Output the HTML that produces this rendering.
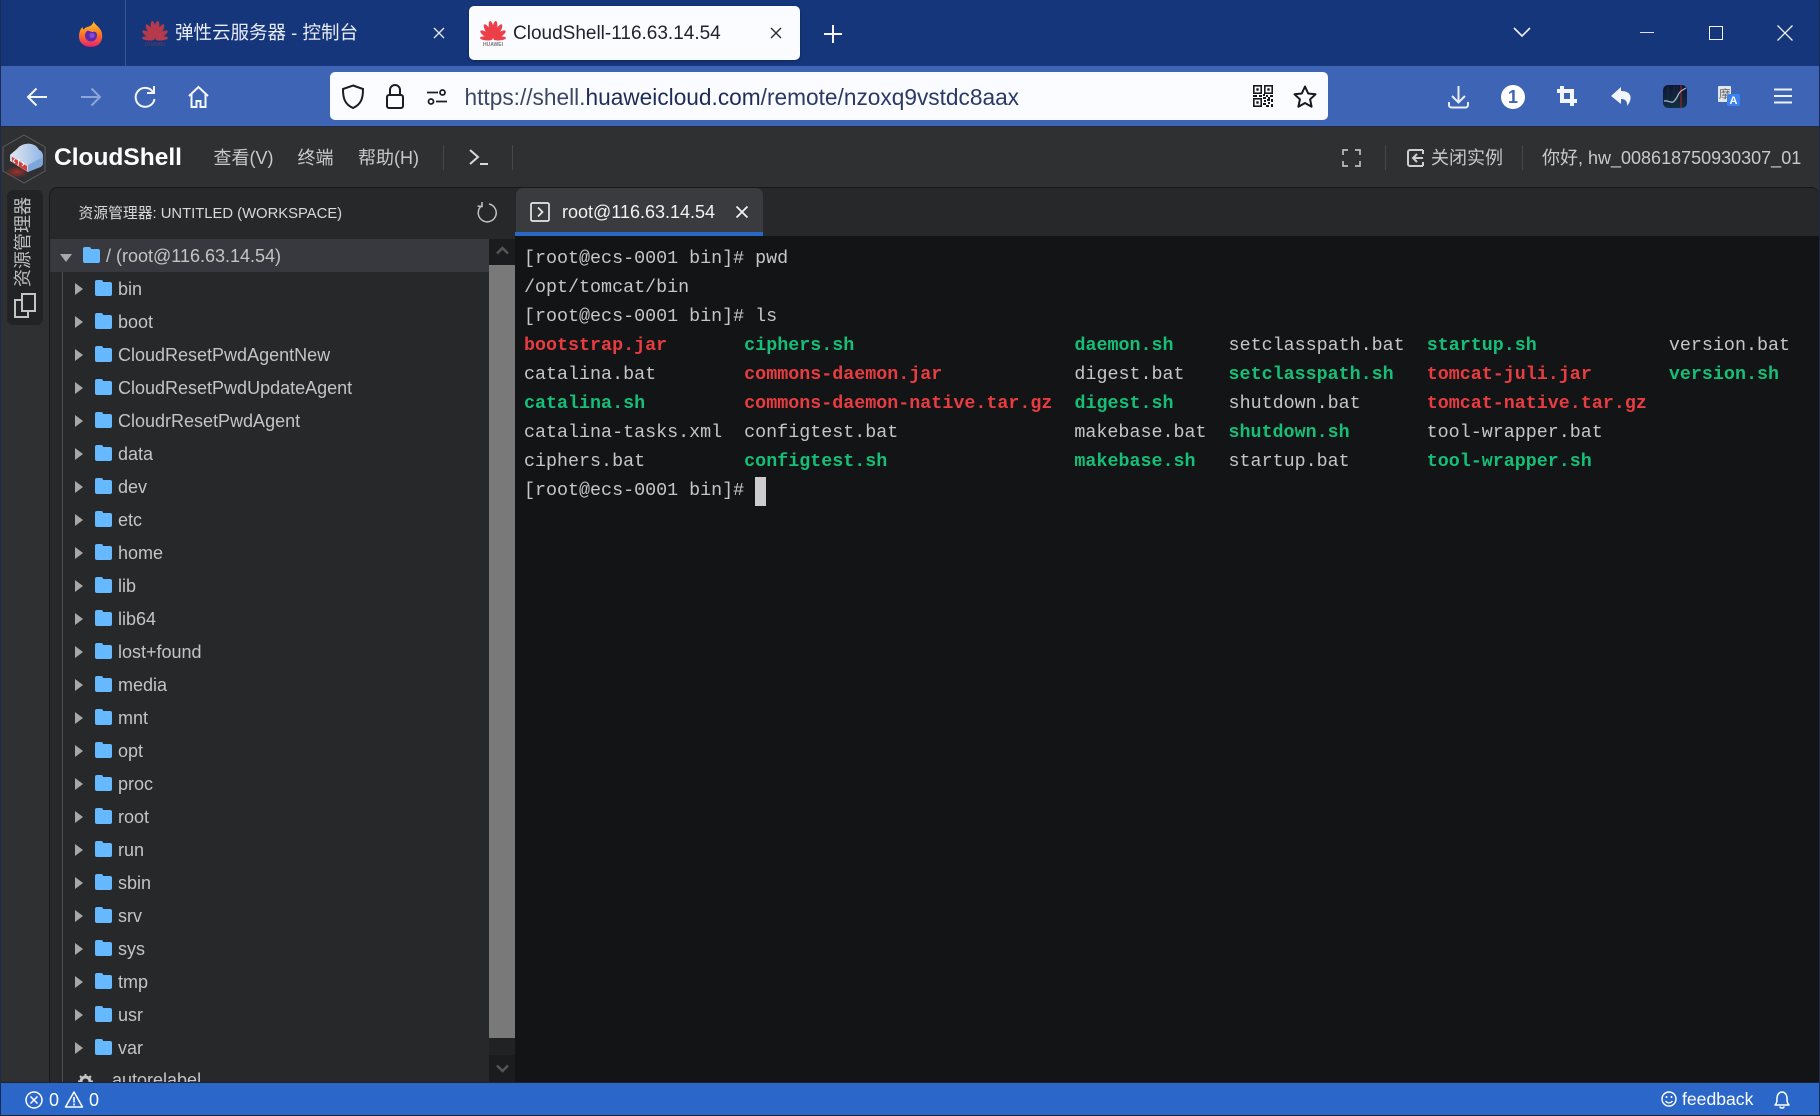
<!DOCTYPE html>
<html lang="zh"><head><meta charset="utf-8"><title>CloudShell-116.63.14.54</title>
<style>
*{box-sizing:border-box;margin:0;padding:0}
html,body{width:1820px;height:1116px;overflow:hidden;background:#2f3032}
body{position:relative;font-family:"Liberation Sans","Noto Sans CJK SC",sans-serif;font-size:18px}
.a{position:absolute;white-space:nowrap}
svg{position:absolute;overflow:visible}
.t{position:absolute;left:0;width:489px;height:33px;line-height:33px;color:#c4c4c4;white-space:nowrap}
.t i{position:absolute;left:75px;top:11px;width:0;height:0;border-left:8px solid #a8a8a8;border-top:6px solid transparent;border-bottom:6px solid transparent}
.t b{position:absolute;left:95px;top:10px;width:17px;height:14px;background:#66b9ff;border-radius:2px}
.t b:before{content:"";position:absolute;left:0;top:-2px;width:8px;height:4px;background:#66b9ff;border-radius:2px 2px 0 0}
.t span{position:absolute;left:118px;top:1px}
#term{position:absolute;left:524px;top:243.5px;font:18.35px/29px "Liberation Mono",monospace;color:#c6c6c6;white-space:pre}
#term .r{color:#e93c41;font-weight:700}
#term .g{color:#15bf77;font-weight:700}
.menu{color:#c9c9c9;top:147px;line-height:22px}
.sep{position:absolute;width:1px;background:#46474a}
</style></head><body>

<!-- browser tab bar -->
<div class="a" style="left:0;top:0;width:1820px;height:66px;background:#16367c"></div>
<div class="a" style="left:125px;top:0;width:1px;height:66px;background:#3b568f"></div>
<svg style="left:79px;top:21px" width="24" height="26" viewBox="0 0 24 26">
<defs><linearGradient id="ff" x1="0" y1="0" x2="0" y2="1"><stop offset="0" stop-color="#ffc52e"/><stop offset=".5" stop-color="#ff7a1f"/><stop offset="1" stop-color="#e8206f"/></linearGradient></defs>
<path d="M14.500 0c.5 3 5 5 7.500 9.500 3 7 0 13-4 15-4 2-10 2-14-1C0 21-1 15 1 10c.5-2 1.500-3 2.500-4 0 1 .5 2 1.500 2.500C6 6 9 6 11 5c2-1 3.500-3 3.500-5z" fill="url(#ff)"/>
<circle cx="12" cy="14.500" r="6" fill="#5a2bb0"/><path d="M8.500 9.500c3-2 7-1 9 2-2-1-3-1-4-.5z" fill="#ff9a2a"/><circle cx="13" cy="14.500" r="2.600" fill="#8a4ad0"/></svg>

<svg style="left:142px;top:20px" width="26" height="26" viewBox="0 0 26 26">
<g fill="#b53a4c" transform="translate(13 19) scale(.84 1) translate(-13 -19)"><ellipse cx="13" cy="9.500" rx="3" ry="8.800" transform="rotate(-11 13 19)"/><ellipse cx="13" cy="9.500" rx="3" ry="8.800" transform="rotate(11 13 19)"/><ellipse cx="13" cy="9.500" rx="2.800" ry="8.500" transform="rotate(-36 13 19)"/><ellipse cx="13" cy="9.500" rx="2.800" ry="8.500" transform="rotate(36 13 19)"/><ellipse cx="13" cy="10" rx="2.500" ry="8" transform="rotate(-62 13 19)"/><ellipse cx="13" cy="10" rx="2.500" ry="8" transform="rotate(62 13 19)"/><ellipse cx="13" cy="11" rx="2" ry="7.500" transform="rotate(-86 13 19)"/><ellipse cx="13" cy="11" rx="2" ry="7.500" transform="rotate(86 13 19)"/></g>
<text x="13" y="26" font-size="5" fill="#4a3a60" text-anchor="middle" font-family="Liberation Sans" font-weight="700">HUAWEI</text></svg>
<div class="a" style="left:175px;top:21px;color:#e8ecf5;font-size:18.500px;line-height:24px">弹性云服务器 - 控制台</div>
<svg style="left:433px;top:27px" width="12" height="12"><path d="M1 1l10 10M11 1L1 11" stroke="#e2e6f0" stroke-width="1.400"/></svg>
<div class="a" style="left:469px;top:6px;width:331px;height:54px;background:#fbfcff;border-radius:5px;box-shadow:0 1px 3px rgba(0,0,0,.3)"></div>
<svg style="left:480px;top:20px" width="26" height="26" viewBox="0 0 26 26">
<g fill="#ec3f49" transform="translate(13 19) scale(.84 1) translate(-13 -19)"><ellipse cx="13" cy="9.500" rx="3" ry="8.800" transform="rotate(-11 13 19)"/><ellipse cx="13" cy="9.500" rx="3" ry="8.800" transform="rotate(11 13 19)"/><ellipse cx="13" cy="9.500" rx="2.800" ry="8.500" transform="rotate(-36 13 19)"/><ellipse cx="13" cy="9.500" rx="2.800" ry="8.500" transform="rotate(36 13 19)"/><ellipse cx="13" cy="10" rx="2.500" ry="8" transform="rotate(-62 13 19)"/><ellipse cx="13" cy="10" rx="2.500" ry="8" transform="rotate(62 13 19)"/><ellipse cx="13" cy="11" rx="2" ry="7.500" transform="rotate(-86 13 19)"/><ellipse cx="13" cy="11" rx="2" ry="7.500" transform="rotate(86 13 19)"/></g>
<text x="13" y="26" font-size="5" fill="#777" text-anchor="middle" font-family="Liberation Sans" font-weight="700">HUAWEI</text></svg>
<div class="a" style="left:513px;top:22px;color:#20242e;font-size:19px;line-height:24px">CloudShell-116.63.14.54</div>
<svg style="left:770px;top:27px" width="12" height="12"><path d="M1 1l10 10M11 1L1 11" stroke="#2a2d36" stroke-width="1.400"/></svg>
<svg style="left:824px;top:25px" width="18" height="18"><path d="M9 0v18M0 9h18" stroke="#f2f4fa" stroke-width="2"/></svg>
<svg style="left:1513px;top:27px" width="18" height="11"><path d="M1 1l8 8 8-8" fill="none" stroke="#f2f4fa" stroke-width="1.600"/></svg>
<div class="a" style="left:1640px;top:32px;width:14px;height:1px;background:#dde3f0"></div>
<div class="a" style="left:1709px;top:26px;width:14px;height:14px;border:1.500px solid #f0f3fa"></div>
<svg style="left:1777px;top:25px" width="16" height="16"><path d="M.5.500l15 15M15.500.500l-15 15" stroke="#f0f3fa" stroke-width="1.300"/></svg>

<!-- nav bar -->
<div class="a" style="left:0;top:66px;width:1820px;height:60px;background:#3e65b5"></div>
<svg style="left:26px;top:86px" width="22" height="22"><path d="M21 11H2M10.500 2.500 2 11l8.500 8.500" fill="none" stroke="#f4f6fb" stroke-width="2"/></svg>
<svg style="left:80px;top:86px" width="22" height="22"><path d="M1 11h19M11.500 2.500 20 11l-8.500 8.500" fill="none" stroke="#8ea6d6" stroke-width="2"/></svg>
<svg style="left:134px;top:85px" width="22" height="24"><path d="M19 7A9.500 9.500 0 1 0 20.500 14M20 1v7h-7" fill="none" stroke="#f4f6fb" stroke-width="2"/></svg>
<svg style="left:187px;top:85px" width="23" height="24"><path d="M2 11 11.500 2 21 11M4.500 9v13h5v-6h4v6h5V9" fill="none" stroke="#f4f6fb" stroke-width="2"/></svg>
<div class="a" style="left:330px;top:72px;width:998px;height:48px;background:#fbfcff;border-radius:5px"></div>
<svg style="left:342px;top:84px" width="22" height="25"><path d="M11 1.500 21 5c0 8-1 15-10 19C2 20 1 13 1 5z" fill="none" stroke="#1c1c22" stroke-width="2"/></svg>
<svg style="left:385px;top:84px" width="20" height="25"><path d="M5 11V6a5 5 0 0 1 10 0v5" fill="none" stroke="#1c1c22" stroke-width="2"/><rect x="2" y="11" width="16" height="13" rx="2" fill="none" stroke="#1c1c22" stroke-width="2"/></svg>
<svg style="left:426px;top:89px" width="22" height="16"><circle cx="16.500" cy="3.500" r="2.500" fill="none" stroke="#1c1c22" stroke-width="1.800"/><path d="M1 3.500h11M10 12.500h11" stroke="#1c1c22" stroke-width="1.800"/><circle cx="5" cy="12.500" r="2.500" fill="none" stroke="#1c1c22" stroke-width="1.800"/></svg>
<div class="a" style="left:464.500px;top:82.500px;font-size:22.680px;line-height:28px;color:#1d2c58"><span style="color:#3b4763">https://shell.</span>huaweicloud.com<span style="color:#2a3966">/remote/nzoxq9vstdc8aax</span></div>
<svg style="left:1253px;top:85px" width="20" height="22" viewBox="0 0 20 22"><g fill="none" stroke="#18181c" stroke-width="1.600"><rect x=".8" y=".8" width="7.400" height="7.400"/><rect x="11.800" y=".8" width="7.400" height="7.400"/><rect x=".8" y="13.800" width="7.400" height="7.400"/></g><g fill="#18181c"><rect x="3.300" y="3.300" width="2.400" height="2.400"/><rect x="14.300" y="3.300" width="2.400" height="2.400"/><rect x="3.300" y="16.300" width="2.400" height="2.400"/><rect x="0" y="10" width="4" height="2"/><rect x="6" y="10" width="3" height="2"/><rect x="10" y="9" width="2" height="2"/><rect x="13" y="10" width="2" height="2"/><rect x="17" y="10" width="3" height="2"/><rect x="10" y="12" width="3" height="2"/><rect x="15" y="12" width="2" height="2"/><rect x="11" y="15" width="2" height="2"/><rect x="14" y="14" width="3" height="2"/><rect x="18" y="14" width="2" height="3"/><rect x="10" y="18" width="3" height="2"/><rect x="15" y="17" width="2" height="2"/><rect x="18" y="19" width="2" height="3"/><rect x="13" y="20" width="3" height="2"/></g></svg>
<svg style="left:1293px;top:85px" width="24" height="24"><path d="M12 1.500l3.200 7 7.300.8-5.400 5 1.500 7.400L12 18l-6.600 3.700 1.500-7.400-5.400-5 7.300-.8z" fill="none" stroke="#18181c" stroke-width="2" stroke-linejoin="round"/></svg>
<svg style="left:1448px;top:85px" width="21" height="24"><path d="M10.500 1v16M4 11l6.500 6.500L17 11" fill="none" stroke="#e8edf7" stroke-width="2"/><path d="M1 17v3a2.500 2.500 0 0 0 2.500 2.500h14A2.500 2.500 0 0 0 20 20v-3" fill="none" stroke="#e8edf7" stroke-width="2"/></svg>
<div class="a" style="left:1501px;top:85px;width:24px;height:24px;border-radius:50%;background:#fff;color:#3e65b5;font-weight:700;font-size:18px;line-height:24px;text-align:center">1</div>
<svg style="left:1557px;top:86px" width="20" height="20"><path d="M5 0v15h15M0 5h15v15" fill="none" stroke="#f2f5fb" stroke-width="4"/></svg>
<svg style="left:1611px;top:87px" width="21" height="19"><path d="M10 0 0 9l10 8v-5c5 0 6.500 3 6 7 6-7 5-15-6-15z" fill="#f2f5fb"/></svg>
<svg style="left:1663px;top:85px" width="24" height="23">
<defs><linearGradient id="dk" x1="0" y1="0" x2="0" y2="1"><stop offset="0" stop-color="#0f1530"/><stop offset="1" stop-color="#0f3040"/></linearGradient></defs>
<rect width="24" height="23" rx="5" fill="url(#dk)"/><path d="M5 1v21M11 1v21M14 1v21" stroke="#1d2a4a"/><path d="M18 0v23" stroke="#b02030"/><path d="M1 16c4-1 6 2 9 1 4-2 5-9 8-11l5-3" fill="none" stroke="#a8b4c4" stroke-width="1.300"/></svg>
<svg style="left:1718px;top:86px" width="22" height="20"><rect x="0" y="0" width="13" height="16" rx="1" fill="#e3e6ee"/><text x="1" y="12" font-size="11.500" fill="#666" font-family="Noto Sans CJK SC">摩</text><rect x="9" y="8" width="13" height="12" rx="2" fill="#3b82f0"/><text x="15.500" y="18" font-size="11" font-weight="700" fill="#fff" text-anchor="middle" font-family="Liberation Sans">A</text></svg>
<svg style="left:1774px;top:88px" width="18" height="16"><path d="M0 1.500h18M0 8h18M0 14.500h18" stroke="#eef2f9" stroke-width="2"/></svg>

<!-- app header -->
<div class="a" style="left:0;top:126px;width:1820px;height:1px;background:#1f2a44"></div>
<svg style="left:0;top:130px" width="60" height="60" viewBox="0 0 60 60">
<defs><radialGradient id="gl"><stop offset="0" stop-color="#c03028" stop-opacity=".8"/><stop offset="1" stop-color="#c03028" stop-opacity="0"/></radialGradient>
<linearGradient id="cl" x1="0" y1="0" x2="1" y2="0"><stop offset="0" stop-color="#e4e8f0"/><stop offset="1" stop-color="#8fb6e6"/></linearGradient></defs>
<path d="M24 5 45 17v24L24 53 3 41V17z" fill="none" stroke="#5c5d60" stroke-width="1"/>
<ellipse cx="17" cy="42" rx="12" ry="6" fill="url(#gl)"/>
<path d="M10 25 17 19C20 15 26 13 31 14 36 15 38 18 39 20 42 21 43 24 43 27V33L28 42 10 31z" fill="#cfd6e2"/>
<path d="M10 25 17 19C20 15 26 13 31 14 36 15 38 18 39 20 42 21 43 24 43 27L28 35z" fill="url(#cl)"/>
<path d="M28 35 43 27V33C43 36 41 37 38 38L28 42z" fill="#7ea6da"/>
<path d="M12 27 27 36V41L12 32z" fill="#d93a36"/>
<path d="M15 29l-2 2 2 2M19 29l-1 7M22 32l2 2-2 2" fill="none" stroke="#fff" stroke-width="1"/></svg>
<div class="a" style="left:54px;top:143px;color:#fff;font-weight:700;font-size:24.500px;line-height:30px">CloudShell</div>
<div class="a menu" style="left:213.500px">查看(V)</div>
<div class="a menu" style="left:297.500px">终端</div>
<div class="a menu" style="left:358px">帮助(H)</div>
<div class="sep" style="left:443px;top:145px;height:25px"></div>
<svg style="left:469px;top:149px" width="20" height="18"><path d="M1 1l8 7-8 7" fill="none" stroke="#d8d8d8" stroke-width="2"/><path d="M11 15h8" stroke="#d8d8d8" stroke-width="2"/></svg>
<div class="sep" style="left:512px;top:145px;height:25px"></div>
<svg style="left:1342px;top:149px" width="19" height="18"><path d="M1 6V1h5M13 1h5v5M18 12v5h-5M6 17H1v-5" fill="none" stroke="#bdbdbd" stroke-width="1.700"/></svg>
<div class="sep" style="left:1385px;top:145px;height:25px"></div>
<svg style="left:1407px;top:149px" width="17" height="18"><path d="M16 1H3a2 2 0 0 0-2 2v12a2 2 0 0 0 2 2h13" fill="none" stroke="#cfcfcf" stroke-width="2"/><path d="M16 5v-4M16 17v-4M16 9H7M10 5 6 9l4 4" fill="none" stroke="#cfcfcf" stroke-width="2"/></svg>
<div class="a menu" style="left:1431px">关闭实例</div>
<div class="sep" style="left:1522px;top:145px;height:25px"></div>
<div class="a menu" style="left:1542px">你好, hw_008618750930307_01</div>

<!-- activity bar -->
<div class="a" style="left:7px;top:190px;width:36px;height:135px;background:#222325;border-radius:6px"></div>
<div class="a" style="left:-22px;top:233px;width:90px;height:18px;transform:rotate(-90deg);color:#bdbdbd;line-height:18px;text-align:center">资源管理器</div>
<svg style="left:14px;top:293px" width="22" height="25"><path d="M8 1h13v17H8zM8 7H1v17h13v-6" fill="none" stroke="#c4c4c4" stroke-width="2"/></svg>

<!-- explorer panel -->
<div class="a" style="left:49px;top:187px;width:466px;height:895px;background:#27282a;border-top:1px solid #17181a;border-left:1px solid #17181a;border-radius:9px 0 0 0;overflow:hidden"></div>
<div class="a" style="left:78.500px;top:204px;color:#d9d9d9;font-size:14.800px;line-height:20px">资源管理器: UNTITLED (WORKSPACE)</div>
<svg style="left:476px;top:202px" width="20" height="21"><path d="M6 3.500A9 9 0 1 0 13 2" fill="none" stroke="#c0c0c0" stroke-width="1.500"/><path d="M6 0v4.500L1.500 4" fill="none" stroke="#c0c0c0" stroke-width="1.500"/></svg>

<div id="tree" class="a" style="left:0;top:239px;width:489px;height:843px;overflow:hidden">
<div class="a" style="left:50px;top:0;width:439px;height:33px;background:#38393f"></div>
<div class="a" style="left:62px;top:33px;width:1px;height:810px;background:#4c4d50"></div>
<div class="t" style="top:0"><i style="left:60px;top:15px;border-left:6px solid transparent;border-right:6px solid transparent;border-top:8px solid #a8a8a8;border-bottom:0"></i><b style="left:83px"></b><span style="left:106px">/ (root@116.63.14.54)</span></div>
<div class="t" style="top:33px"><i></i><b></b><span>bin</span></div>
<div class="t" style="top:66px"><i></i><b></b><span>boot</span></div>
<div class="t" style="top:99px"><i></i><b></b><span>CloudResetPwdAgentNew</span></div>
<div class="t" style="top:132px"><i></i><b></b><span>CloudResetPwdUpdateAgent</span></div>
<div class="t" style="top:165px"><i></i><b></b><span>CloudrResetPwdAgent</span></div>
<div class="t" style="top:198px"><i></i><b></b><span>data</span></div>
<div class="t" style="top:231px"><i></i><b></b><span>dev</span></div>
<div class="t" style="top:264px"><i></i><b></b><span>etc</span></div>
<div class="t" style="top:297px"><i></i><b></b><span>home</span></div>
<div class="t" style="top:330px"><i></i><b></b><span>lib</span></div>
<div class="t" style="top:363px"><i></i><b></b><span>lib64</span></div>
<div class="t" style="top:396px"><i></i><b></b><span>lost+found</span></div>
<div class="t" style="top:429px"><i></i><b></b><span>media</span></div>
<div class="t" style="top:462px"><i></i><b></b><span>mnt</span></div>
<div class="t" style="top:495px"><i></i><b></b><span>opt</span></div>
<div class="t" style="top:528px"><i></i><b></b><span>proc</span></div>
<div class="t" style="top:561px"><i></i><b></b><span>root</span></div>
<div class="t" style="top:594px"><i></i><b></b><span>run</span></div>
<div class="t" style="top:627px"><i></i><b></b><span>sbin</span></div>
<div class="t" style="top:660px"><i></i><b></b><span>srv</span></div>
<div class="t" style="top:693px"><i></i><b></b><span>sys</span></div>
<div class="t" style="top:726px"><i></i><b></b><span>tmp</span></div>
<div class="t" style="top:759px"><i></i><b></b><span>usr</span></div>
<div class="t" style="top:792px"><i></i><b></b><span>var</span></div>
<div class="t" style="top:825px"><span style="left:112px;top:0">autorelabel</span>
<svg style="left:78px;top:10px" width="15" height="15"><circle cx="7.500" cy="7.500" r="4.500" fill="none" stroke="#c4c4c4" stroke-width="3"/><path d="M7.500 0v3M7.500 12v3M0 7.500h3M12 7.500h3M2 2l2 2M11 11l2 2M13 2l-2 2M4 11l-2 2" stroke="#c4c4c4" stroke-width="2"/></svg></div>
</div>

<!-- scrollbar -->
<div class="a" style="left:489px;top:239px;width:26px;height:843px;background:#212224"></div>
<div class="a" style="left:489px;top:239px;width:26px;height:26px;background:#1b1c1e"></div>
<div class="a" style="left:489px;top:265px;width:26px;height:773px;background:#797979"></div>
<div class="a" style="left:489px;top:1055px;width:26px;height:27px;background:#1b1c1e"></div>
<svg style="left:496px;top:246px" width="13" height="9"><path d="M1 7.500l5.500-5.500L12 7.500" fill="none" stroke="#555" stroke-width="2.500"/></svg>
<svg style="left:496px;top:1064px" width="13" height="9"><path d="M1 1.500 6.500 7 12 1.500" fill="none" stroke="#555" stroke-width="2.500"/></svg>

<!-- terminal tab strip -->
<div class="a" style="left:515px;top:187px;width:1305px;height:49px;background:#27282a;border-top:1px solid #17181a;border-radius:0 9px 0 0"></div>
<div class="a" style="left:516px;top:188px;width:247px;height:44px;background:#3a3b3e;border-radius:7px 7px 0 0"></div>
<div class="a" style="left:515px;top:232px;width:248px;height:4px;background:#2b68c5"></div>
<svg style="left:530px;top:202px" width="20" height="20"><rect x="1" y="1" width="18" height="18" rx="1.500" fill="none" stroke="#e8e8e8" stroke-width="1.700"/><path d="M8 5.500l4.500 4.500L8 14.500" fill="none" stroke="#e8e8e8" stroke-width="1.700"/></svg>
<div class="a" style="left:562px;top:201px;color:#f2f2f2;line-height:22px">root@116.63.14.54</div>
<svg style="left:736px;top:206px" width="12" height="12"><path d="M.5.500l11 11M11.500.500l-11 11" stroke="#f2f2f2" stroke-width="1.800"/></svg>

<!-- terminal -->
<div class="a" style="left:515px;top:236px;width:1305px;height:846px;background:#131416"></div>
<div id="term">[root@ecs-0001 bin]# pwd
/opt/tomcat/bin
[root@ecs-0001 bin]# ls
<span class="r">bootstrap.jar</span>       <span class="g">ciphers.sh</span>                    <span class="g">daemon.sh</span>     setclasspath.bat  <span class="g">startup.sh</span>            version.bat
catalina.bat        <span class="r">commons-daemon.jar</span>            digest.bat    <span class="g">setclasspath.sh</span>   <span class="r">tomcat-juli.jar</span>       <span class="g">version.sh</span>
<span class="g">catalina.sh</span>         <span class="r">commons-daemon-native.tar.gz</span>  <span class="g">digest.sh</span>     shutdown.bat      <span class="r">tomcat-native.tar.gz</span>
catalina-tasks.xml  configtest.bat                makebase.bat  <span class="g">shutdown.sh</span>       tool-wrapper.bat
ciphers.bat         <span class="g">configtest.sh</span>                 <span class="g">makebase.sh</span>   startup.bat       <span class="g">tool-wrapper.sh</span>
[root@ecs-0001 bin]#</div>
<div class="a" style="left:755px;top:477px;width:11px;height:29px;background:#cdcdcd"></div>

<!-- status bar -->
<div class="a" style="left:0;top:1082px;width:1820px;height:33px;background:#2a67c9;border-top:1px solid #1d2430"></div>
<div class="a" style="left:0;top:1115px;width:1820px;height:1px;background:#1a2230"></div>
<svg style="left:25px;top:1091px" width="18" height="18"><circle cx="9" cy="9" r="8" fill="none" stroke="#fff" stroke-width="1.500"/><path d="M5.500 5.500l7 7M12.500 5.500l-7 7" stroke="#fff" stroke-width="1.500"/></svg>
<div class="a" style="left:49px;top:1089px;color:#fff;line-height:22px">0</div>
<svg style="left:65px;top:1091px" width="18" height="17"><path d="M9 1 17.500 16H.500z" fill="none" stroke="#fff" stroke-width="1.500" stroke-linejoin="round"/><path d="M9 6v5.500M9 12.500v2" stroke="#fff" stroke-width="1.600"/></svg>
<div class="a" style="left:89px;top:1089px;color:#fff;line-height:22px">0</div>
<svg style="left:1661px;top:1091px" width="16" height="16"><circle cx="8" cy="8" r="7" fill="none" stroke="#fff" stroke-width="1.400"/><circle cx="5.500" cy="6" r="1" fill="#fff"/><circle cx="10.500" cy="6" r="1" fill="#fff"/><path d="M4.500 10c2 2.500 5 2.500 7 0" fill="none" stroke="#fff" stroke-width="1.300"/></svg>
<div class="a" style="left:1682px;top:1088px;color:#fff;font-size:17.600px;line-height:22px">feedback</div>
<svg style="left:1774px;top:1090px" width="16" height="19"><path d="M1 15c2-2 2-4 2-7 0-3 2-6 5-6s5 3 5 6c0 3 0 5 2 7z" fill="none" stroke="#fff" stroke-width="1.500" stroke-linejoin="round"/><path d="M6 16.500c0 2 4 2 4 0" fill="none" stroke="#fff" stroke-width="1.500"/></svg>

<!-- window edges -->
<div class="a" style="left:0;top:0;width:1px;height:1116px;background:#1a2a50"></div>
<div class="a" style="left:1819px;top:0;width:1px;height:1116px;background:#1a2a50"></div>
</body></html>
